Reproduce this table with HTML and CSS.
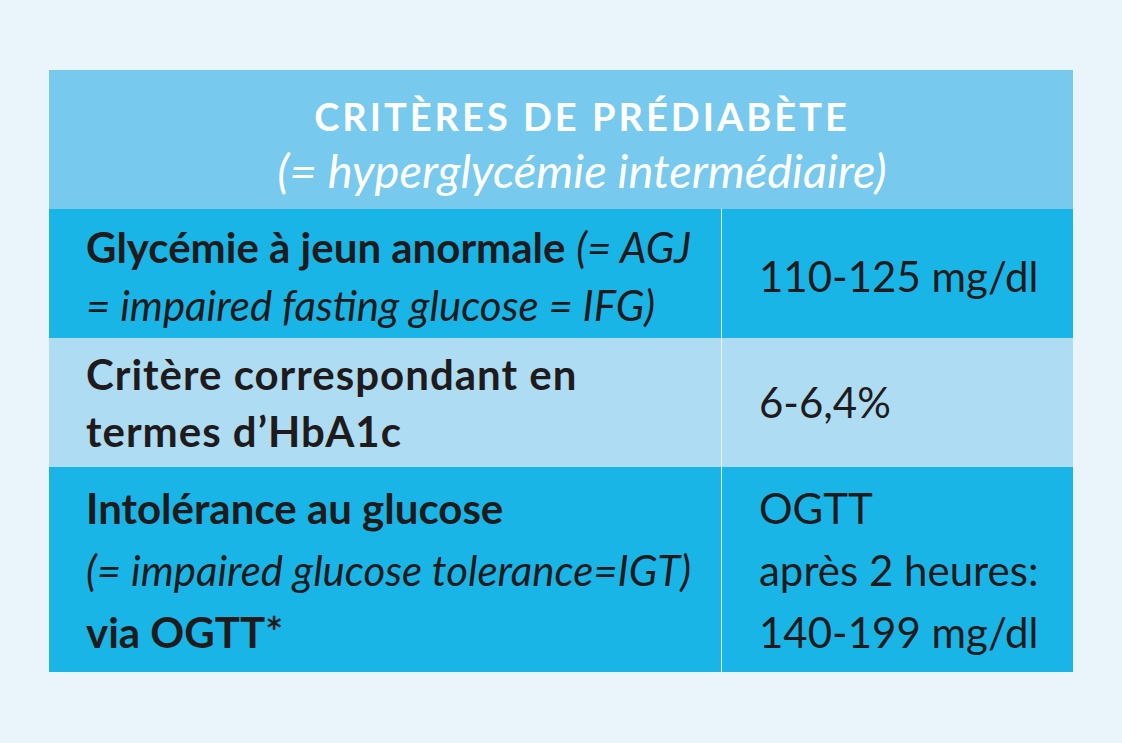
FILE: index.html
```html
<!DOCTYPE html>
<html lang="fr">
<head>
<meta charset="utf-8">
<title>Critères de prédiabète</title>
<link rel="stylesheet" href="styles.css">
</head>
<body>
<div class="page">
  <div class="table">
    <div class="head">
      <div class="head-title">CRITÈRES DE PRÉDIABÈTE</div>
      <div class="head-sub">(= hyperglycémie intermédiaire)</div>
    </div>
    <div class="row row-dark row-1">
      <div class="cell cell-left">
        <div class="line"><b>Glycémie à jeun anormale</b> <i>(= AGJ</i></div>
        <div class="line"><i>= impaired fasting glucose = IFG)</i></div>
      </div>
      <div class="cell cell-right">
        <div class="line">110-125 mg/dl</div>
      </div>
    </div>
    <div class="row row-light row-2">
      <div class="cell cell-left">
        <div class="line"><b>Critère correspondant en</b></div>
        <div class="line"><b>termes d’HbA1c</b></div>
      </div>
      <div class="cell cell-right">
        <div class="line">6-6,4%</div>
      </div>
    </div>
    <div class="row row-dark row-3">
      <div class="cell cell-left">
        <div class="line"><b>Intolérance au glucose</b></div>
        <div class="line"><i>(= impaired glucose tolerance=IGT)</i></div>
        <div class="line"><b>via OGTT*</b></div>
      </div>
      <div class="cell cell-right">
        <div class="line">OGTT</div>
        <div class="line">après 2 heures:</div>
        <div class="line">140-199 mg/dl</div>
      </div>
    </div>
  </div>
</div>
</body>
</html>
```

FILE: styles.css
```css
html, body {
  margin: 0;
  padding: 0;
}
body {
  background: #eaf5fb;
  font-family: "Lato", "Open Sans", sans-serif;
  color: #1f1b1c;
}
.page {
  width: 1122px;
  height: 743px;
  padding: 70px 0 0 49px;
  box-sizing: border-box;
}
.table {
  width: 1024px;
  display: flex;
  flex-direction: column;
}
.head {
  height: 139px;
  background: #77c9ee;
  color: #ffffff;
  display: flex;
  flex-direction: column;
  align-items: center;
  box-sizing: border-box;
  padding-top: 20px;
  padding-left: 42px;
}
.head-title {
  font-weight: 700;
  font-size: 38px;
  letter-spacing: 3px;
  line-height: 52px;
}
.head-sub {
  font-style: italic;
  font-weight: 400;
  font-size: 47px;
  line-height: 56px;
}
.row {
  display: flex;
}
.row-dark {
  background: #18b5e6;
}
.row-light {
  background: #aeddf3;
}
.row-1 { height: 129px; }
.row-2 { height: 129px; }
.row-3 { height: 205px; }
.cell {
  display: flex;
  flex-direction: column;
  justify-content: center;
  box-sizing: border-box;
  padding-left: 37px;
  font-size: 42px;
}
.cell-left {
  width: 673px;
  border-right: 1px solid #e6f5fc;
}
.cell-right {
  flex: 1;
  padding-left: 37px;
}
.row-1 .cell { padding-top: 4px; }
.row-1 .line { line-height: 58px; }
.row-2 .line { line-height: 57px; }
.row-2 .cell-left { letter-spacing: 1px; }
.row-3 .line { line-height: 62px; }
.line b { font-weight: 700; }
.line i { font-style: italic; font-weight: 400; }
```
